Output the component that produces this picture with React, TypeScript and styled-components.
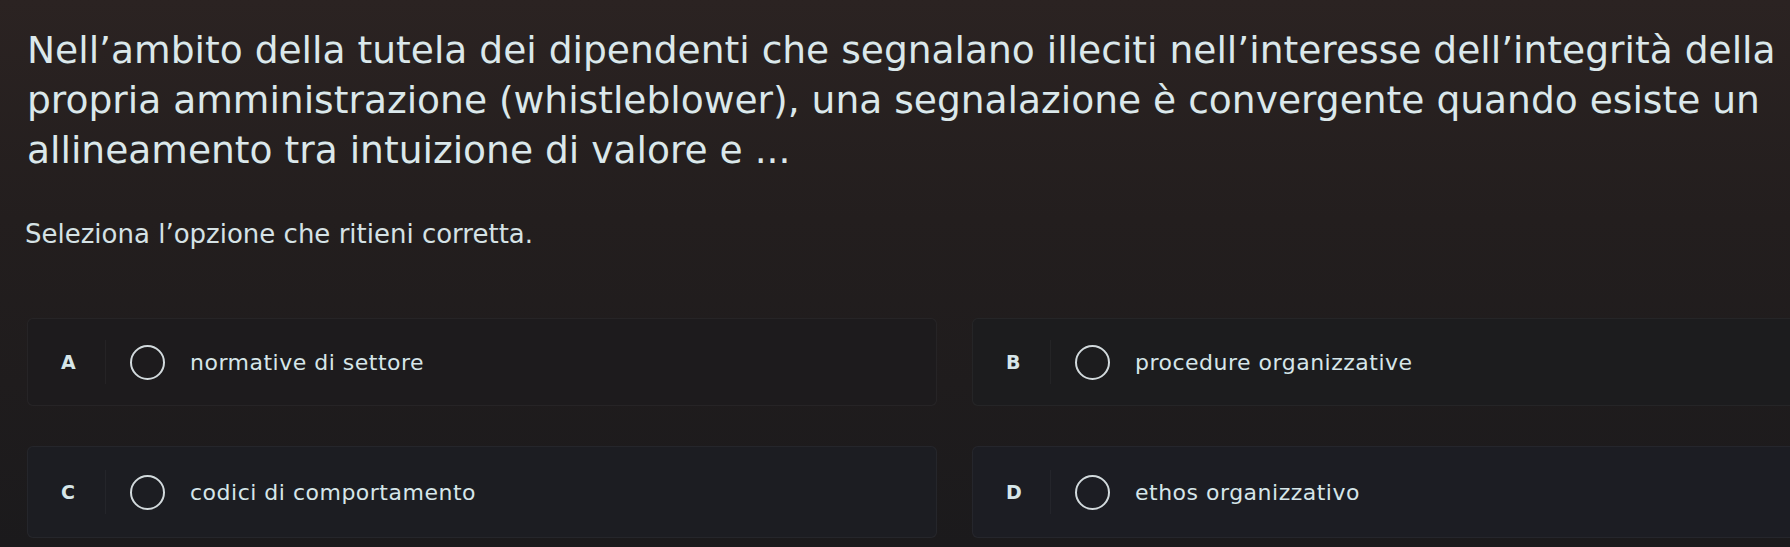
import styled, { createGlobalStyle } from "styled-components";

const GlobalStyle = createGlobalStyle`
  html, body {
    margin: 0;
    padding: 0;
    background: #1b1a1b;
  }
  body {
    font-family: "DejaVu Sans", "Noto Sans", sans-serif;
    -webkit-font-smoothing: antialiased;
  }
`;

const Page = styled.main`
  width: 1790px;
  height: 547px;
  overflow: hidden;
  box-sizing: border-box;
  padding-top: 25px;
  background: linear-gradient(180deg, #2b2322 0%, #231e1e 40%, #1b1a1c 100%);
  color: #dbe8eb;
`;

const Question = styled.h1`
  margin: 0 0 0 27px;
  font-size: 37.6px;
  line-height: 50px;
  font-weight: 400;
  white-space: nowrap;
`;

const Hint = styled.p`
  margin: 44px 0 0 25px;
  font-size: 26px;
  line-height: 30px;
  color: #d5e2e5;
`;

const Options = styled.div`
  margin: 69px 0 0 27px;
  display: grid;
  grid-template-columns: 910px 910px;
  grid-template-rows: 88px 92px;
  column-gap: 35px;
  row-gap: 40px;
`;

const Card = styled.label<{ $tint: string }>`
  display: flex;
  align-items: center;
  box-sizing: border-box;
  padding-left: 33px;
  border-radius: 6px;
  background: ${(p) => p.$tint};
  border: 1px solid rgba(255, 255, 255, 0.045);
  cursor: pointer;
`;

const Letter = styled.span`
  width: 22px;
  font-size: 19px;
  font-weight: 700;
  color: #d6e6e9;
`;

const Divider = styled.span`
  width: 1px;
  height: 44px;
  margin: 0 24px 0 22px;
  background: rgba(255, 255, 255, 0.04);
`;

const Radio = styled.span`
  width: 31px;
  height: 31px;
  border-radius: 50%;
  border: 2px solid #d2dadd;
  margin-right: 25px;
  flex-shrink: 0;
`;

const Answer = styled.span`
  font-size: 22px;
  letter-spacing: 0.5px;
  color: #d6e6e9;
`;

const options = [
  { key: "A", text: "normative di settore", tint: "#1d1b1d" },
  { key: "B", text: "procedure organizzative", tint: "#1c1c1e" },
  { key: "C", text: "codici di comportamento", tint: "#1c1d22" },
  { key: "D", text: "ethos organizzativo", tint: "#1c1d23" },
];

export default function App() {
  return (
    <>
      <GlobalStyle />
      <Page>
        <Question>
          Nell’ambito della tutela dei dipendenti che segnalano illeciti nell’interesse dell’integrità della
          <br />
          propria amministrazione (whistleblower), una segnalazione è convergente quando esiste un
          <br />
          allineamento tra intuizione di valore e ...
        </Question>
        <Hint>Seleziona l’opzione che ritieni corretta.</Hint>
        <Options>
          {options.map((o) => (
            <Card key={o.key} $tint={o.tint}>
              <Letter>{o.key}</Letter>
              <Divider />
              <Radio />
              <Answer>{o.text}</Answer>
            </Card>
          ))}
        </Options>
      </Page>
    </>
  );
}
